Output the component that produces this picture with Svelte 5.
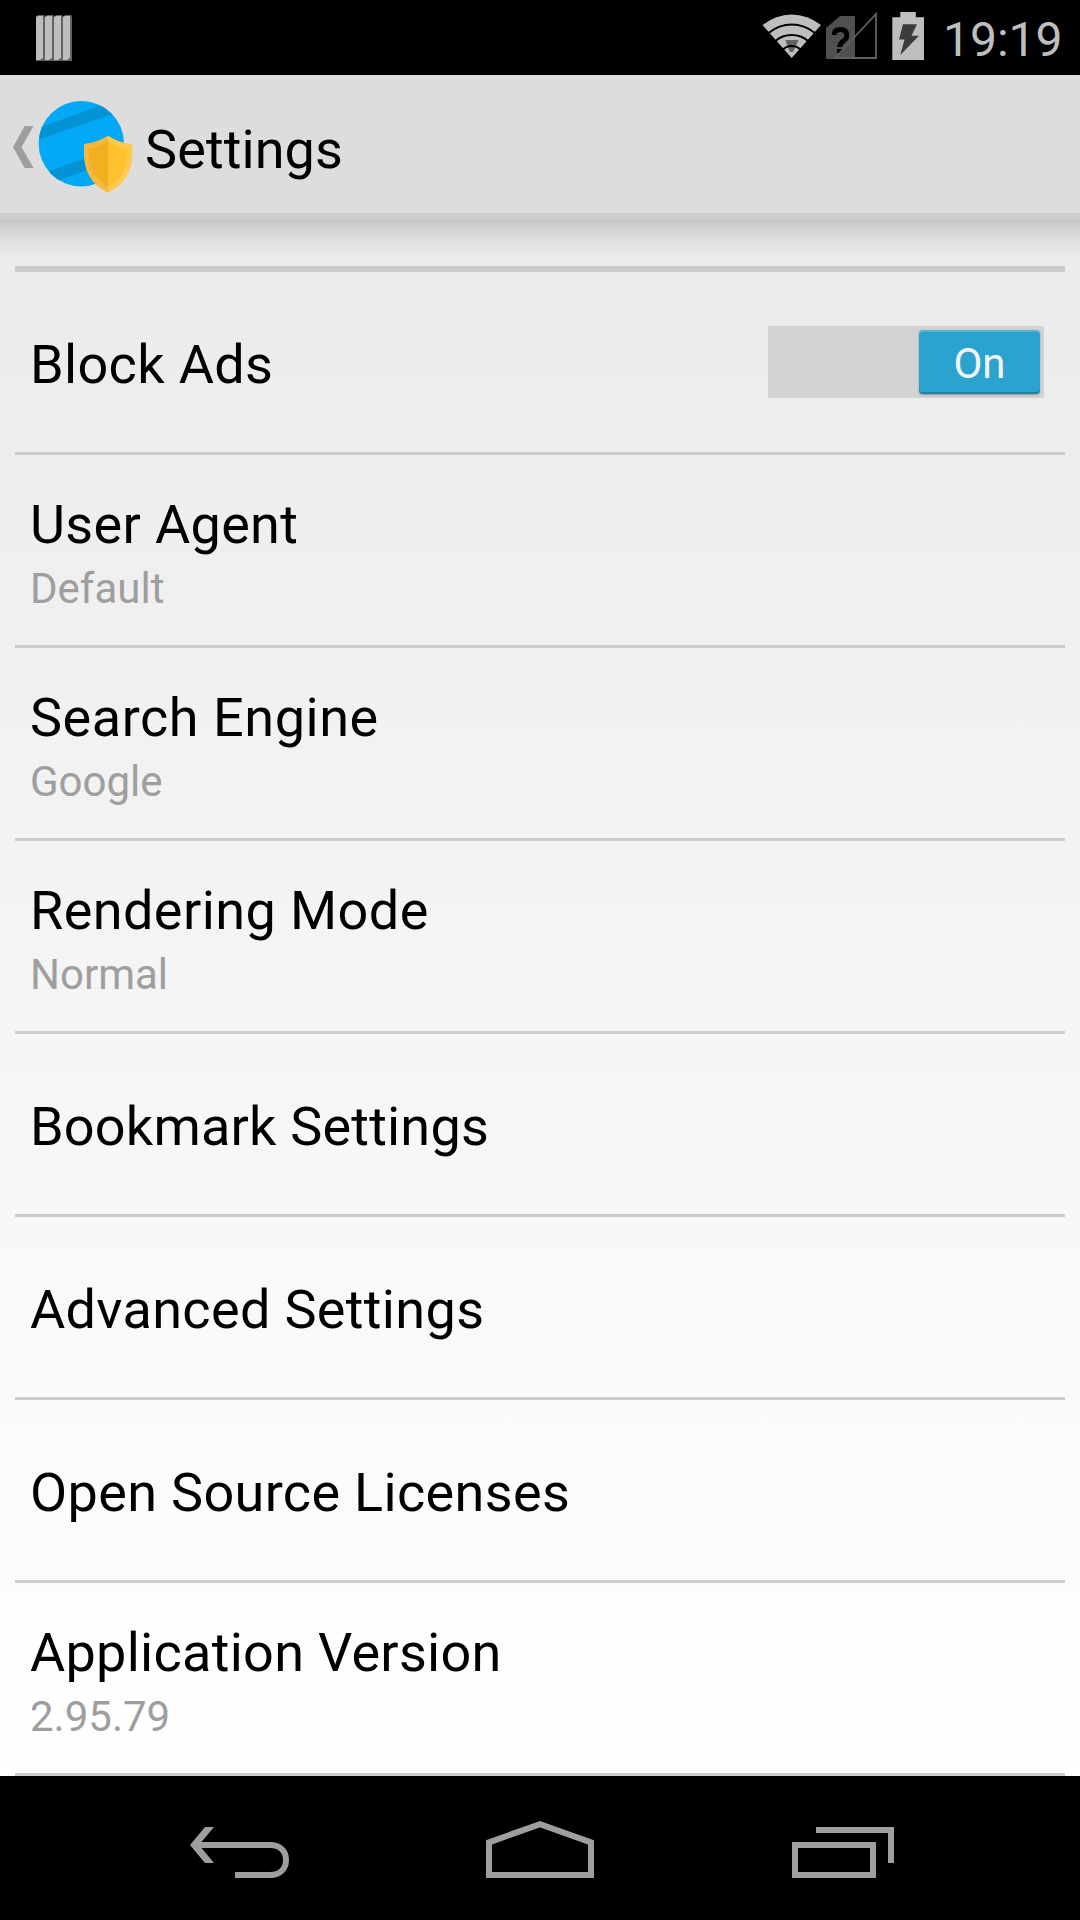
<script>
  let blockAds = $state(true);

  // tracking: letter spacing of the title in px
  const items = [
    { title: 'User Agent', summary: 'Default', tracking: 0.34 },
    { title: 'Search Engine', summary: 'Google', tracking: 0.54 },
    { title: 'Rendering Mode', summary: 'Normal', tracking: 0.42 },
    { title: 'Bookmark Settings', tracking: 0.2 },
    { title: 'Advanced Settings', tracking: 0.34 },
    { title: 'Open Source Licenses', tracking: 0.34 },
    { title: 'Application Version', summary: '2.95.79', tracking: 0.28 }
  ];
</script>

<div class="screen">
  <div class="status-bar">
    <svg class="bars" width="36" height="46" viewBox="0 0 36 46">
      {#each [0, 9, 18, 27] as x}
        <path d="M{x} 2l2-2h6l1 2v44h-9z" fill="#636363" />
        <path d="M{x} 2l2-1h5v42l-2 1-1 1h-4z" fill="#bebebe" />
      {/each}
    </svg>

    <!-- wifi, sim, battery -->
    <svg class="icons" width="170" height="75" viewBox="760 0 170 75">
      <path d="M791.7 58L762.5 25Q776 14.5 791.7 14.5T821 25z" fill="#bebebe" />
      <path d="M785.500 40h13l-2 5-3.500 7h-3l-3-7z" fill="#636363" />
      <g fill="none" stroke="#000" stroke-width="2.200">
        <path d="M768.500 33Q779 24.500 791.700 24.500T815 33" />
        <path d="M775.500 41Q782 35 791.700 35T808 41" />
        <path d="M783 49.500Q786.500 46 791.700 46T800.500 49.500" />
      </g>
      <path d="M826 59V28l14-12h15v43z" fill="#505050" />
      <path d="M834 35q0-5.500 6.300-5.500 6.500 0 6.500 6 0 3.500-3.500 5.500-3.500 2.500-3.500 6" fill="none" stroke="#000" stroke-width="4.800" />
      <path d="M837 49h5v4h-5z" fill="#000" />
      <path d="M835 58L876 14V58z" fill="none" stroke="#606060" stroke-width="1.800" />
      <path d="M892.300 60V17.300h8V12h15.500v5.300h8.200V60z" fill="#bebebe" />
      <path d="M903 24.300h14l-5.500 11.500h7.500L900.300 55l4.200-15.500h-5.500z" fill="#3c3c3c" />
    </svg>
    <span class="clock">19:19</span>
  </div>

  <header class="action-bar">
    <svg class="up" width="21" height="42" viewBox="0 0 21 42">
      <path d="M11.700 0H20.500L8.500 21l12 21h-8.800L0 21z" fill="#9e9e9e" />
    </svg>
    <svg class="logo" width="96" height="92" viewBox="0 0 96 92">
      <clipPath id="globe"><circle cx="43.300" cy="42.700" r="42.700" /></clipPath>
      <g clip-path="url(#globe)">
        <rect width="96" height="92" fill="#03a9f4" />
        <path d="M-4 28.700L70 1.700 80 11.200-4 40.200zM8 71.500L64 51v12.500L19 80z" fill="#0392d4" />
      </g>
      <path d="M70.200 34.700Q81 42 94.300 43V53C94.300 72 84 85.500 70.200 91.300 56 85.500 46.200 72 46.200 53V43Q59 42 70.200 34.700z" fill="#ffca4e" />
      <path d="M70.200 34.700Q59 42 46.200 43V53C46.200 72 56 85.500 70.200 91.300z" fill="#f6b93f" />
      <path d="M70.200 40Q79 46 89.500 47.500V53C89.500 69 81 80 70.200 85.500z" fill="#ffc12d" />
      <path d="M70.200 40Q61 46 50.700 47.500V53C50.700 69 59 80 70.200 85.500z" fill="#f3af22" />
    </svg>
    <h1>Settings</h1>
  </header>

  <main>
    <div class="category"></div>
    <div class="row">
      <div class="title">Block Ads</div>
      <button class="switch" class:on={blockAds} onclick={() => (blockAds = !blockAds)}>
        <span class="thumb">{blockAds ? 'On' : 'Off'}</span>
      </button>
    </div>
    {#each items as item}
      <div class="row" class:tall={item.summary}>
        <div class="text">
          <div class="title" style:letter-spacing="{item.tracking}px">{item.title}</div>
          {#if item.summary}
            <div class="summary">{item.summary}</div>
          {/if}
        </div>
      </div>
    {/each}
  </main>

  <nav>
    <svg width="100" height="52" viewBox="0 0 100 52">
      <path d="M6 18H80C90 18 96 24 96 33S90 48 80 48H45" />
      <path class="fill" d="M0 18L15 0h9L9 18l15 18h-9z" />
    </svg>
    <svg class="home" width="108" height="58" viewBox="0 0 108 58">
      <path d="M3 21.300L54 3.200 105 21.300V54H3z" />
    </svg>
    <svg width="102" height="52" viewBox="0 0 102 52">
      <path d="M3 18H81V48H3zM24 3H99V36" />
    </svg>
  </nav>
</div>

<style>
  :global(body) {
    background: #000;
  }

  .screen {
    display: flex;
    flex-direction: column;
    width: 1080px;
    height: 1920px;
    overflow: hidden;
    font-family: Roboto, "Noto Sans", sans-serif;
    color: #000;
    background: linear-gradient(#e8e8e8, #fff 1776px);
  }

  .status-bar {
    display: flex;
    align-items: flex-start;
    height: 75px;
    flex: none;
    background: #000;
  }

  .bars {
    margin: 15px auto 0 36px;
  }

  .clock {
    width: 150px;
    box-sizing: border-box;
    padding-left: 13px;
    color: #bebebe;
    font-size: 48px;
    line-height: 80px;
    white-space: nowrap;
  }

  .action-bar {
    display: flex;
    align-items: flex-start;
    height: 147px;
    box-sizing: border-box;
    flex: none;
    background: linear-gradient(#ddd 138px, #ccc 138px, #ccc 144px, #c6c6c6 144px);
  }

  .up {
    margin: 51px 4px 0 13px;
  }

  .logo {
    margin-top: 26px;
  }

  h1 {
    margin: 0 0 0 11px;
    font-size: 54px;
    font-weight: 400;
    line-height: 150px;
    letter-spacing: 0.1px;
  }

  main {
    height: 1554px;
    box-sizing: border-box;
    padding: 44px 15px 0;
    flex: none;
    background: linear-gradient(rgba(0, 0, 0, 0.14), rgba(0, 0, 0, 0.05) 18px, transparent 38px);
  }

  .category {
    height: 6px;
    background: #ccc;
  }

  .row {
    display: flex;
    align-items: center;
    justify-content: space-between;
    height: 183px;
    box-sizing: border-box;
    padding: 0 21px 0 15px;
    border-bottom: 3px solid #ccc;
  }

  .row.tall {
    height: 193px;
  }

  .title {
    padding-top: 5px;
    font-size: 54px;
    line-height: 72px;
    letter-spacing: 0.34px;
    white-space: nowrap;
  }

  .tall .title {
    padding-top: 6px;
  }

  .summary {
    font-size: 42px;
    line-height: 56px;
    color: #9e9e9e;
  }

  .switch {
    display: flex;
    width: 276px;
    height: 72px;
    padding: 4px;
    border: 0;
    background: #d3d3d3;
    font-family: inherit;
  }

  .switch.on {
    justify-content: flex-end;
  }

  .thumb {
    width: 121px;
    height: 64px;
    border-radius: 4px;
    font-size: 42px;
    line-height: 67px;
    text-align: center;
    color: #f3f3f3;
    background: #999;
    box-shadow: inset 0 2px 0 rgba(255, 255, 255, 0.2), inset 0 -2px 0 rgba(0, 0, 0, 0.2), 0 1px 2px rgba(0, 0, 0, 0.3);
  }

  .on .thumb {
    background: #2ba3cf;
  }

  nav {
    display: flex;
    align-items: flex-start;
    justify-content: space-between;
    flex: 1;
    padding: 51px 186px 0 190px;
    background: #000;
  }

  .home {
    margin: -6px 2px 0 0;
  }

  nav path {
    fill: none;
    stroke: #9e9e9e;
    stroke-width: 6;
  }

  nav .fill {
    fill: #9e9e9e;
    stroke: none;
  }
</style>
